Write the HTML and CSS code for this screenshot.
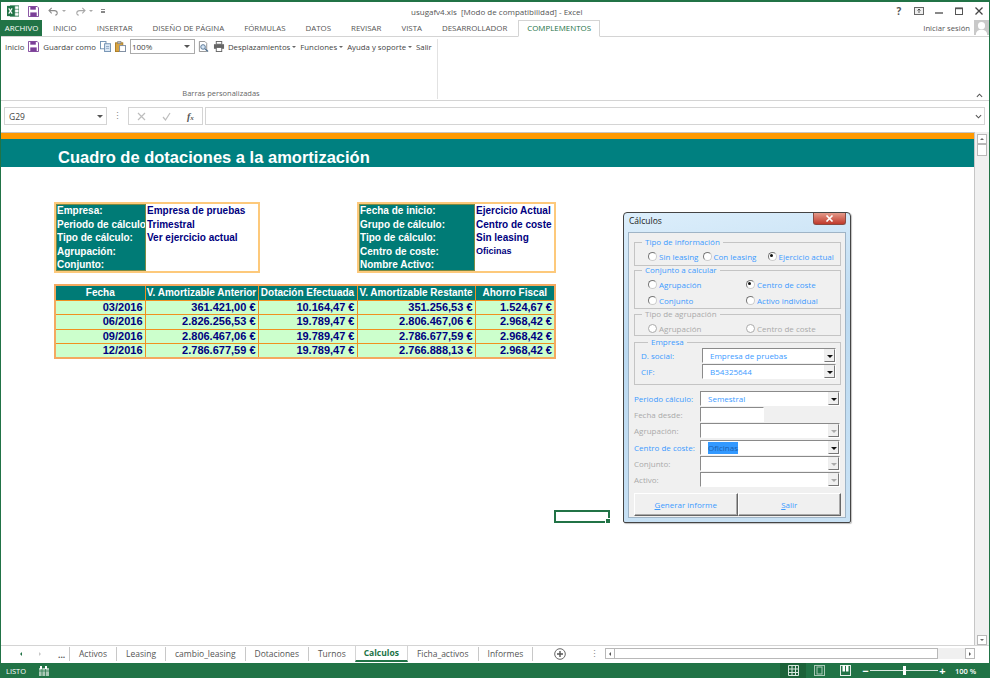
FILE: index.html
```html
<!DOCTYPE html>
<html lang="es">
<head>
<meta charset="utf-8">
<title>usugafv4.xls - Excel</title>
<link rel="stylesheet" href="styles.css">
</head>
<body>
<div class="app">
  <header class="titlebar">
    <div class="qat">
      <svg class="ico-xl" viewBox="0 0 14 14"><rect x="4" y="1" width="10" height="12" fill="#fff" stroke="#217346"/><path d="M9 1v12M4 5h10M4 9h10" stroke="#217346" stroke-width=".7"/><rect x="0" y="1" width="9" height="12" fill="#217346"/><path d="M2 4l4 6M6 4l-4 6" stroke="#fff" stroke-width="1.4"/></svg>
      <svg class="ico-save" viewBox="0 0 12 12"><path d="M.5.5h9.5l1.500 1.500v9.500H.5z" fill="#fff" stroke="#7b3f98"/><rect x="2.500" y=".5" width="6" height="3.500" fill="#7b3f98"/><rect x="2.500" y="7" width="7" height="4.500" fill="#7b3f98"/></svg>
      <svg class="ico-undo" viewBox="0 0 12 10"><path d="M4 1L1 4l3 3M1 4h6c4 0 4 5 1 5" fill="none" stroke="#8a8a8a" stroke-width="1.200"/></svg>
      <span class="mini-caret"></span>
      <svg class="ico-redo" viewBox="0 0 12 10"><path d="M8 1l3 3-3 3M11 4H5c-4 0-4 5-1 5" fill="none" stroke="#a8a8a8" stroke-width="1.200"/></svg>
      <span class="mini-caret"></span>
      <span class="qat-more"></span>
    </div>
    <div class="doc-title">usugafv4.xls&nbsp; [Modo de compatibilidad] - Excel</div>
    <div class="win-ctrls">
      <span class="help">?</span>
      <svg class="ctl" viewBox="0 0 10 8"><rect x=".5" y=".5" width="9" height="7" fill="#eee" stroke="#666"/><path d="M5 2v4M3.500 3.500L5 2l1.500 1.500" stroke="#333" fill="none" stroke-width=".8"/></svg>
      <svg class="ctl" viewBox="0 0 10 8"><path d="M1 6h8" stroke="#555" stroke-width="1.400"/></svg>
      <svg class="ctl" viewBox="0 0 10 8"><rect x="1.500" y="1" width="7" height="6.500" fill="none" stroke="#555"/><path d="M1.500 1.500h7" stroke="#555" stroke-width="1.400"/></svg>
      <svg class="ctl" viewBox="0 0 10 8"><path d="M1.500 .5l7 7M8.500 .5l-7 7" stroke="#444" stroke-width="1.300"/></svg>
    </div>
  </header>

  <nav class="tabs">
    <span class="tab file">ARCHIVO</span>
    <span class="tab">INICIO</span>
    <span class="tab">INSERTAR</span>
    <span class="tab">DISEÑO DE PÁGINA</span>
    <span class="tab">FÓRMULAS</span>
    <span class="tab">DATOS</span>
    <span class="tab">REVISAR</span>
    <span class="tab">VISTA</span>
    <span class="tab">DESARROLLADOR</span>
    <span class="tab active">COMPLEMENTOS</span>
    <span class="signin">Iniciar sesión</span>
    <svg class="avatar" viewBox="0 0 16 16"><rect width="16" height="16" fill="#c9c9c9"/><circle cx="8" cy="6" r="3.800" fill="#fff"/><path d="M2 16c0-4 2.500-5.500 6-5.500s6 1.500 6 5.500z" fill="#fff"/></svg>
  </nav>

  <section class="ribbon">
    <div class="rib-group">
      <div class="rib-row">
        <span class="ri w-inicio">Inicio</span>
        <svg class="ri-ico" viewBox="0 0 12 12"><path d="M.5.5h9.500l1.500 1.500v9.500H.5z" fill="#fff" stroke="#7b3f98"/><rect x="2.500" y=".5" width="6" height="3.500" fill="#7b3f98"/><rect x="2.500" y="7" width="7" height="4.500" fill="#7b3f98"/></svg>
        <span class="ri">Guardar como</span>
        <svg class="ri-ico" viewBox="0 0 12 12"><rect x=".5" y=".5" width="6" height="8" fill="#fff" stroke="#6f8fb0"/><rect x="5" y="3" width="6.500" height="8.500" fill="#dbe8f5" stroke="#6f8fb0"/><path d="M6.500 6h3.500M6.500 8h3.500" stroke="#6f8fb0" stroke-width=".7"/></svg>
        <svg class="ri-ico" viewBox="0 0 12 12"><rect x=".5" y="2" width="8" height="9.500" fill="#d9a441" stroke="#a87a22"/><rect x="3" y=".5" width="3.500" height="2.500" fill="#bbb" stroke="#777" stroke-width=".6"/><rect x="5" y="5" width="6.500" height="6.500" fill="#fff" stroke="#7a8aa0"/></svg>
        <div class="zoombox"><span>100%</span><i class="caret"></i></div>
        <svg class="ri-ico" viewBox="0 0 12 12"><path d="M1.500.5h6l2 2v9h-8z" fill="#fff" stroke="#8c8c8c"/><circle cx="5.500" cy="6.500" r="2.500" fill="#d6e6f5" stroke="#4f6f8f"/><path d="M7.500 8.500l3.500 3" stroke="#4f6f8f" stroke-width="1.300"/></svg>
        <svg class="ri-ico wide" viewBox="0 0 12 12"><rect x="3" y=".5" width="6" height="3" fill="#fff" stroke="#666"/><rect x=".5" y="3.500" width="11" height="5" fill="#666"/><rect x="3" y="7" width="6" height="4.500" fill="#fff" stroke="#666"/></svg>
        <span class="ri">Desplazamientos<i class="caret small"></i></span>
        <span class="ri">Funciones<i class="caret small"></i></span>
        <span class="ri">Ayuda y soporte<i class="caret small"></i></span>
        <span class="ri">Salir</span>
      </div>
      <div class="rib-caption">Barras personalizadas</div>
    </div>
    <svg class="collapse" viewBox="0 0 8 5"><path d="M1 4l3-3 3 3" fill="none" stroke="#555" stroke-width="1.200"/></svg>
  </section>

  <section class="fbar">
    <div class="namebox"><span>G29</span><i class="caret"></i></div>
    <span class="fdots">⋮</span>
    <div class="fbtns">
      <svg viewBox="0 0 9 9"><path d="M1 1l7 7M8 1L1 8" stroke="#bdbdbd" stroke-width="1.200"/></svg>
      <svg viewBox="0 0 9 9"><path d="M1 5l2.500 3L8 1" fill="none" stroke="#bdbdbd" stroke-width="1.200"/></svg>
      <span class="fx">f<sub>x</sub></span>
    </div>
    <div class="finput"><svg viewBox="0 0 8 5"><path d="M1 1l3 3 3-3" fill="none" stroke="#555" stroke-width="1.200"/></svg></div>
  </section>

  <main class="workarea">
    <div class="sheet">
      <div class="orange-band"></div>
      <h1 class="banner">Cuadro de dotaciones a la amortización</h1>
      <div class="reports">
        <div class="info-row">
          <div class="info info-a">
            <div class="keys"><span>Empresa:</span><span>Periodo de cálculo:</span><span>Tipo de cálculo:</span><span>Agrupación:</span><span>Conjunto:</span></div>
            <div class="vals"><span>Empresa de pruebas</span><span>Trimestral</span><span>Ver ejercicio actual</span><span></span><span></span></div>
          </div>
          <div class="info info-b">
            <div class="keys"><span>Fecha de inicio:</span><span>Grupo de cálculo:</span><span>Tipo de cálculo:</span><span>Centro de coste:</span><span>Nombre Activo:</span></div>
            <div class="vals"><span>Ejercicio Actual</span><span>Centro de coste</span><span>Sin leasing</span><span class="small-val">Oficinas</span><span></span></div>
          </div>
        </div>
        <table class="data">
          <colgroup><col class="c1"><col class="c2"><col class="c3"><col class="c4"><col class="c5"></colgroup>
          <thead><tr><th>Fecha</th><th>V. Amortizable Anterior</th><th>Dotación Efectuada</th><th>V. Amortizable Restante</th><th>Ahorro Fiscal</th></tr></thead>
          <tbody>
            <tr><td>03/2016</td><td>361.421,00 €</td><td>10.164,47 €</td><td>351.256,53 €</td><td>1.524,67 €</td></tr>
            <tr><td>06/2016</td><td>2.826.256,53 €</td><td>19.789,47 €</td><td>2.806.467,06 €</td><td>2.968,42 €</td></tr>
            <tr><td>09/2016</td><td>2.806.467,06 €</td><td>19.789,47 €</td><td>2.786.677,59 €</td><td>2.968,42 €</td></tr>
            <tr><td>12/2016</td><td>2.786.677,59 €</td><td>19.789,47 €</td><td>2.766.888,13 €</td><td>2.968,42 €</td></tr>
          </tbody>
        </table>
      </div>
      <div class="cell-cursor"></div>

      <div class="dialog">
        <div class="dlg-title"><span>Cálculos</span><span class="dlg-close"><svg viewBox="0 0 9 7"><path d="M1.500 .5l6 6M7.500 .5l-6 6" stroke="#fff" stroke-width="1.600"/></svg></span></div>
        <div class="dlg-body">
          <fieldset class="gb h-a">
            <legend>Tipo de información</legend>
            <div class="opts three">
              <label class="r">Sin leasing</label><label class="r">Con leasing</label><label class="r on">Ejercicio actual</label>
            </div>
          </fieldset>
          <fieldset class="gb h-b">
            <legend>Conjunto a calcular</legend>
            <div class="opts two rows">
              <label class="r">Agrupación</label><label class="r on">Centro de coste</label>
              <label class="r">Conjunto</label><label class="r">Activo individual</label>
            </div>
          </fieldset>
          <fieldset class="gb h-c off">
            <legend>Tipo de agrupación</legend>
            <div class="opts two">
              <label class="r">Agrupación</label><label class="r">Centro de coste</label>
            </div>
          </fieldset>
          <fieldset class="gb h-d">
            <legend>Empresa</legend>
            <div class="emp-row"><span class="lbl">D. social:</span><div class="combo"><span>Empresa de pruebas</span><b class="drop"></b></div></div>
            <div class="emp-row"><span class="lbl">CIF:</span><div class="combo"><span>B54325644</span><b class="drop"></b></div></div>
          </fieldset>
          <div class="fields">
            <div class="f-row"><span class="lbl">Periodo cálculo:</span><div class="combo"><span>Semestral</span><b class="drop"></b></div></div>
            <div class="f-row off"><span class="lbl">Fecha desde:</span><div class="combo short"></div></div>
            <div class="f-row off"><span class="lbl">Agrupación:</span><div class="combo"><b class="drop"></b></div></div>
            <div class="f-row"><span class="lbl">Centro de coste:</span><div class="combo"><span class="sel">Oficinas</span><b class="drop"></b></div></div>
            <div class="f-row off"><span class="lbl">Conjunto:</span><div class="combo"><b class="drop"></b></div></div>
            <div class="f-row off"><span class="lbl">Activo:</span><div class="combo"><b class="drop"></b></div></div>
          </div>
          <div class="btns">
            <button type="button"><u>G</u>enerar informe</button>
            <button type="button"><u>S</u>alir</button>
          </div>
        </div>
      </div>
    </div>
    <aside class="vscroll">
      <span class="sbtn"><i class="tri up"></i></span>
      <span class="vthumb"></span>
      <span class="vtrack"></span>
      <span class="sbtn"><i class="tri down"></i></span>
    </aside>
  </main>

  <footer class="sheettabs">
    <div class="navs"><i class="tri left dark"></i><i class="tri right pale"></i><span class="ell">...</span></div>
    <span class="st">Activos</span>
    <span class="st">Leasing</span>
    <span class="st">cambio_leasing</span>
    <span class="st">Dotaciones</span>
    <span class="st">Turnos</span>
    <span class="st current">Calculos</span>
    <span class="st">Ficha_activos</span>
    <span class="st">Informes</span>
    <svg class="plus" viewBox="0 0 12 12"><circle cx="6" cy="6" r="5.300" fill="none" stroke="#666"/><path d="M6 3v6M3 6h6" stroke="#555" stroke-width="1.400"/></svg>
    <span class="hdots">⋮</span>
    <div class="hscroll">
      <span class="sbtn"><i class="tri left"></i></span>
      <span class="hthumb"></span>
      <span class="htrack"></span>
      <span class="sbtn"><i class="tri right"></i></span>
    </div>
  </footer>

  <footer class="status">
    <span class="listo">LISTO</span>
    <svg class="st-ico" viewBox="0 0 10 10"><rect x="0" y="2" width="10" height="8" fill="#a9c9b6"/><path d="M0 5h10M3 2v8M6.500 2v8" stroke="#217346" stroke-width=".7"/><rect x="1" y="0" width="2" height="3" fill="#fff"/><rect x="6" y="0" width="2" height="3" fill="#fff"/></svg>
    <div class="views">
      <span class="view cur"><svg viewBox="0 0 11 11"><path d="M.5.5h10v10H.5zM.5 4h10M.5 7.500h10M4 .5v10M7.500 .5v10" fill="none" stroke="#d8e8de"/></svg></span>
      <span class="view"><svg viewBox="0 0 11 11"><rect x=".5" y=".5" width="10" height="10" fill="none" stroke="#a9c9b6"/><rect x="3" y="2" width="5" height="7" fill="none" stroke="#a9c9b6"/></svg></span>
      <span class="view"><svg viewBox="0 0 11 11"><rect x=".5" y=".5" width="10" height="10" fill="none" stroke="#e4efe8"/><rect x="2.500" y=".5" width="2.500" height="6" fill="#fff"/><rect x="6" y=".5" width="2.500" height="6" fill="#fff"/></svg></span>
    </div>
    <div class="zoomer">
      <span class="zm">−</span>
      <div class="slider"><i></i></div>
      <span class="zm">+</span>
    </div>
    <span class="pct">100 %</span>
  </footer>
</div>
</body>
</html>
```

FILE: styles.css
```css
* { box-sizing: border-box; }
html, body { margin: 0; height: 100%; overflow: hidden; }
body { font-family: "Open Sans", "Noto Sans", sans-serif; font-size: 8px; color: #444; background: #fff; }
.app { width: 990px; height: 678px; display: flex; flex-direction: column; border: 1px solid #217346; border-top-width: 2px; border-bottom: 0; }

/* Title bar */
.titlebar { height: 18px; display: flex; align-items: center; position: relative; flex: none; }
.qat { display: flex; align-items: center; padding-left: 6px; width: 400px; flex: none; }
.ico-xl { width: 12px; height: 12px; }
.ico-save { width: 11px; height: 11px; margin-left: 9px; }
.ico-undo { width: 11px; height: 9px; margin-left: 9px; }
.ico-redo { width: 11px; height: 9px; margin-left: 9px; }
.mini-caret { width: 0; height: 0; border: 2px solid transparent; border-top-color: #aaa; border-bottom-width: 0; margin-left: 3px; }
.qat-more { width: 4px; height: 4px; margin-left: 8px; border-top: 1px solid #888; border-bottom: 2px solid #888; }
.doc-title { flex: 1; color: #555; font-size: 8px; white-space: nowrap; padding-left: 10px; }
.win-ctrls { display: flex; align-items: center; gap: 10px; padding-right: 5px; }
.help { width: 10px; font-weight: 700; font-size: 10px; text-align: center; color: #555; }
.ctl { width: 10px; height: 8px; }

/* Tabs */
.tabs { height: 17px; display: flex; align-items: stretch; border-bottom: 1px solid #d4d4d4; flex: none; }
.tab { padding: 0 10px; font-size: 7.900px; line-height: 17px; color: #555; white-space: nowrap; flex: none; }
.tab.file { background: #217346; color: #fff; width: 41px; padding: 0; text-align: center; margin-right: 1px; line-height: 16px; }
.tab.active { color: #217346; border: 1px solid #d4d4d4; border-bottom: 1px solid #fff; height: 17px; line-height: 15px; margin-left: 1px; padding: 0 8px; }
.signin { margin-left: auto; font-size: 7.700px; line-height: 16px; color: #555; padding-right: 4px; flex: none; }
.avatar { width: 15px; height: 15px; flex: none; }

/* Ribbon */
.ribbon { height: 64px; display: flex; border-bottom: 1px solid #d4d4d4; position: relative; flex: none; }
.rib-group { width: 437px; height: 60px; border-right: 1px solid #e2e2e2; padding: 0 0 0 4px; display: flex; flex-direction: column; margin-top: 2px; }
.rib-row { display: flex; align-items: center; height: 15px; }
.ri { color: #444; font-size: 7.800px; white-space: nowrap; margin-right: 4px; display: flex; align-items: center; flex: none; }
.ri-ico { width: 11px; height: 11px; margin-right: 4px; flex: none; }
.ri-ico.wide { width: 12px; margin-right: 3px; }
.zoombox { width: 65px; height: 15px; border: 1px solid #ababab; display: flex; align-items: center; justify-content: space-between; padding: 0 4px 0 1px; margin-right: 3px; font-size: 8px; flex: none; }
.caret { width: 0; height: 0; border: 3px solid transparent; border-top-color: #555; border-bottom-width: 0; display: block; }
.caret.small { border-width: 2.500px; border-bottom-width: 0; border-top-color: #666; margin-left: 2px; }
.rib-caption { margin-top: auto; text-align: center; font-size: 7.500px; color: #666; height: 11px; line-height: 11px; }
.collapse { position: absolute; right: 6px; bottom: 2px; width: 7px; height: 5px; }

/* Formula bar */
.fbar { height: 18px; margin-top: 6px; display: flex; align-items: stretch; padding-left: 3px; padding-right: 4px; flex: none; }
.namebox { width: 103px; border: 1px solid #d4d4d4; display: flex; align-items: center; justify-content: space-between; padding: 0 3px 0 4px; font-size: 8.500px; color: #444; }
.fdots { width: 21px; text-align: center; line-height: 17px; color: #888; font-size: 9px; }
.fbtns { width: 75px; border: 1px solid #d4d4d4; display: flex; align-items: center; gap: 16px; padding-left: 8px; }
.fbtns svg { width: 9px; height: 9px; }
.fx { font-family: "Liberation Serif", serif; font-style: italic; font-size: 10px; color: #555; font-weight: 700; }
.fx sub { font-size: 7px; vertical-align: baseline; }
.finput { flex: 1; margin-left: 2px; border: 1px solid #d4d4d4; display: flex; align-items: center; justify-content: flex-end; padding-right: 2px; }
.finput svg { width: 7px; height: 5px; }

/* Sheet */
.workarea { flex: 1; min-height: 0; margin-top: 7px; display: flex; }
.sheet { flex: 1; position: relative; border-top: 1px solid #c6c6c6; border-right: 1px solid #c6c6c6; overflow: hidden; font-family: "Liberation Sans", Arial, sans-serif; }
.orange-band { height: 6px; background: #ff9900; }
.banner { margin: 0; height: 28px; background: #008080; color: #fff; font-size: 16.500px; font-weight: 700; line-height: 36px; padding-left: 57px; overflow: visible; white-space: nowrap; }
.reports { padding: 35px 0 0 53px; width: 560px; }
.info-row { display: flex; gap: 97px; }
.info { display: flex; height: 71px; border: 2px solid #fdc97b; font-size: 10px; font-weight: 700; }
.info-a { width: 206px; }
.info-b { width: 199px; }
.keys { background: #007b76; color: #fff; border: 1px solid #7c8b45; display: flex; flex-direction: column; overflow: hidden; white-space: nowrap; padding: 0; }
.info-a .keys { width: 90px; }
.info-b .keys { width: 116px; }
.vals { flex: 1; color: #000080; display: flex; flex-direction: column; overflow: hidden; white-space: nowrap; padding: 1px 0 0 1px; }
.keys span, .vals span { height: 13.600px; line-height: 11px; display: block; flex: none; }
.small-val { font-size: 9px; }
.data { border-collapse: collapse; table-layout: fixed; width: 500px; margin-top: 11px; font-size: 10px; font-weight: 700; border: 2px solid #f4a960; }
.c1 { width: 90px; } .c2 { width: 113px; } .c3 { width: 99px; } .c4 { width: 118px; } .c5 { width: 80px; }
.data th { height: 15px; padding: 0; background: #007b76; color: #fff; text-align: center; border: 1px solid #f09020; border-top: 1px solid #7c8b45; white-space: nowrap; overflow: hidden; }
.data td { height: 14.500px; padding: 0 2px 0 0; font-size: 11px; background: #ccffcc; color: #000080; text-align: right; border: 1px solid #f09020; white-space: nowrap; line-height: 13px; }
.cell-cursor { position: absolute; left: 553px; top: 377px; width: 56px; height: 13px; border: 2px solid #217346; }
.cell-cursor::after { content: ""; position: absolute; right: -3px; bottom: -3px; width: 4px; height: 4px; background: #217346; border: 1px solid #fff; }

/* Dialog */
.dialog { position: absolute; left: 622px; top: 79px; width: 228px; height: 311px; border: 1px solid #444; border-radius: 4px 4px 2px 2px; background: linear-gradient(170deg, #dceefb, #bcdaf1 40%, #c9e2f5); box-shadow: 1px 1px 1px rgba(0,0,0,.25); font-family: "Open Sans", "DejaVu Sans", sans-serif; font-size: 8px; color: #3d9bff; padding: 0 4px 4px; display: flex; flex-direction: column; }
.dlg-title { height: 19px; flex: none; display: flex; justify-content: space-between; color: #222; font-size: 8.500px; line-height: 16px; padding-left: 1px; }
.dlg-close { width: 33px; height: 12px; background: linear-gradient(#e49a8a, #c0392b); border-radius: 0 0 3px 3px; border: 1px solid #8a4a40; border-top: 0; display: flex; align-items: center; justify-content: center; }
.dlg-close svg { width: 9px; height: 7px; }
.dlg-body { flex: 1; background: #f0f0f0; border: 1px solid #9fb4c6; padding: 5px 4px 0 5px; display: flex; flex-direction: column; }
.gb { margin: 0; padding: 0; border: 1px solid #c4c4c4; min-width: 0; position: relative; flex: none; }
.gb legend { padding: 0 3px; margin-left: 7px; line-height: 8px; height: 8px; font-size: 8px; }
.h-a { height: 28px; }
.h-b { height: 43px; }
.h-c { height: 26px; margin-top: 1px; }
.h-d { height: 47px; margin-top: 2px; margin-bottom: 5.500px; padding: 1px 3px 0 6px; }
.off, .off .lbl { color: #aaa; }
.opts { display: grid; padding-left: 13px; padding-top: 5px; }
.opts.three { grid-template-columns: 54.500px 65px 1fr; }
.opts.two { grid-template-columns: 98px 1fr; }
.opts.rows { row-gap: 4px; }
.r { position: relative; padding-left: 11px; line-height: 12px; white-space: nowrap; }
.r::before { content: ""; position: absolute; left: 0; top: 1px; width: 7px; height: 7px; border-radius: 50%; background: #fff; border: 1px solid #777; border-right-color: #ccc; border-bottom-color: #ccc; }
.r.on::after { content: ""; position: absolute; left: 2px; top: 3px; width: 3px; height: 3px; border-radius: 50%; background: #111; }
.off .r::before { border-color: #aaa; }
.emp-row { display: flex; align-items: center; height: 16px; }
.emp-row .lbl { width: 61px; flex: none; }
.emp-row .combo { width: 134px; flex: none; }
.combo { position: relative; height: 15px; background: #fff; border: 1px solid #fff; border-top: 1px solid #8a8a8a; border-left: 1px solid #8a8a8a; line-height: 13px; padding-left: 7px; white-space: nowrap; }
.drop { position: absolute; right: 0; top: 0; width: 11px; height: 13px; background: #f0f0f0; border: 1px solid #777; border-top-color: #eee; border-left-color: #eee; }
.drop::after { content: ""; position: absolute; left: 2px; top: 5px; border: 3px solid transparent; border-top-color: #111; border-bottom-width: 0; }
.off .drop::after { border-top-color: #aaa; }
.fields { display: flex; flex-direction: column; gap: 1.400px; padding-right: 1px; flex: none; }
.f-row { display: flex; align-items: center; height: 15px; }
.f-row .lbl { width: 66px; flex: none; white-space: nowrap; }
.f-row .combo { flex: 1; }
.f-row .combo.short { flex: none; width: 64px; }
.sel { background: #3399ff; color: #1b5fb0; display: inline-block; line-height: 12px; }
.btns { display: flex; margin-top: 6px; height: 23px; flex: none; }
.btns button { flex: 1; padding: 0; font: inherit; color: #3d9bff; background: #f0f0f0; border: 1px solid #fff; border-right-color: #666; border-bottom-color: #666; box-shadow: inset -1px -1px 0 #aaa; }

/* Scrollbars */
.vscroll { width: 14px; display: flex; flex-direction: column; align-items: center; background: #f0f0f0; padding: 2px 0 0; flex: none; }
.sbtn { width: 10px; height: 10px; background: #fff; border: 1px solid #b8b8b8; display: flex; align-items: center; justify-content: center; flex: none; }
.vthumb { width: 10px; height: 12px; background: #fff; border: 1px solid #b8b8b8; flex: none; }
.vtrack { flex: 1; }
.tri { display: block; width: 0; height: 0; border: 2px solid transparent; }
.tri.up { border-bottom-color: #666; border-top-width: 0; }
.tri.down { border-top-color: #666; border-bottom-width: 0; }
.tri.left { border-right-color: #555; border-left-width: 0; }
.tri.right { border-left-color: #555; border-right-width: 0; }
.tri.pale { border-left-color: #c8c8c8; }
.tri.dark { border-right-color: #217346; }

/* Sheet tabs */
.sheettabs { height: 18px; display: flex; align-items: stretch; border-top: 1px solid #d4d4d4; flex: none; font-size: 8.500px; position: relative; }
.navs { width: 69px; display: flex; align-items: center; gap: 17px; padding-left: 19px; border-right: 1px solid #c8c8c8; margin: 1px 0 2px; flex: none; }
.ell { font-weight: 700; color: #555; margin-left: 0; }
.st { padding: 0 9px; line-height: 13px; margin: 1px 0 2px; border-right: 1px solid #c8c8c8; white-space: nowrap; color: #555; flex: none; }
.st.current { margin: 0 0 1px -1px; padding: 0 8px; line-height: 14px; font-weight: 700; color: #217346; border: 1px solid #d4d4d4; border-top: 0; border-bottom: 2px solid #217346; background: #fff; }
.plus { width: 12px; height: 12px; margin: 2px 0 0 21px; flex: none; }
.hdots { width: 10px; margin-left: 24px; line-height: 15px; color: #888; flex: none; }
.hscroll { position: absolute; left: 604px; right: 14px; top: 2px; height: 11px; display: flex; }
.hscroll .sbtn { height: 11px; }
.hthumb { width: 323px; background: #fff; border: 1px solid #b8b8b8; border-left: 0; }
.htrack { flex: 1; background: #f0f0f0; }

/* Status */
.status { height: 15px; background: #217346; color: #fff; display: flex; align-items: center; flex: none; font-size: 7.500px; margin: 0 -1px; }
.listo { margin-left: 6px; width: 33px; }
.st-ico { width: 10px; height: 10px; }
.views { display: flex; margin-left: auto; height: 15px; }
.view { width: 26px; display: flex; align-items: center; justify-content: center; }
.view.cur { background: #1c6239; }
.view svg { width: 11px; height: 11px; }
.zoomer { display: flex; align-items: center; margin-left: 3px; }
.zm { width: 9px; text-align: center; font-weight: 700; font-size: 11px; line-height: 12px; }
.slider { width: 68px; height: 1px; background: #d8e8de; position: relative; }
.slider i { position: absolute; left: 33px; top: -4px; width: 3px; height: 9px; background: #fff; }
.pct { width: 35px; margin-left: 8px; font-weight: 600; white-space: nowrap; }
```
